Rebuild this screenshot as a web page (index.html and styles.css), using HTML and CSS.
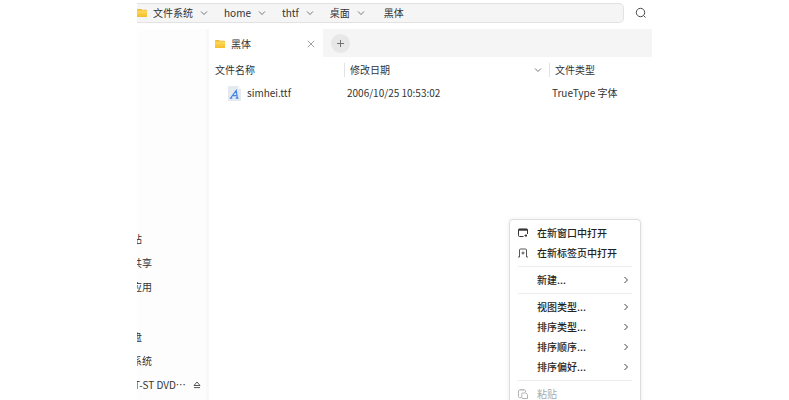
FILE: index.html
```html
<!DOCTYPE html>
<html lang="zh-CN">
<head>
<meta charset="utf-8">
<title>黑体</title>
<link rel="stylesheet" href="styles.css">
</head>
<body>
<svg class="defs" aria-hidden="true">
  <defs>
    <linearGradient id="gold" x1="0" y1="0" x2="0" y2="1"><stop offset="0" stop-color="#ffdc62"/><stop offset="1" stop-color="#f5bd27"/></linearGradient>
    <symbol id="folder" viewBox="0 0 10 8"><path d="M0 1Q0 0 1 0H4L5 .8H9Q10 .8 10 1.8V7Q10 8 9 8H1Q0 8 0 7Z" fill="#edb92f"/><rect y="1.4" width="10" height="6.6" rx="1" fill="url(#gold)"/></symbol>
    <symbol id="down" viewBox="0 0 8 8"><path d="M1 2.5L4 5.5L7 2.5" fill="none" stroke="currentColor" stroke-width=".9"/></symbol>
    <symbol id="right" viewBox="0 0 8 8"><path d="M2.5 1L5.5 4L2.5 7" fill="none" stroke="currentColor"/></symbol>
  </defs>
</svg>
<div class="window">
  <header class="toolbar">
    <nav class="address">
      <svg class="folder"><use href="#folder"/></svg>
      <a class="crumb" href="#">文件系统</a><svg class="chevron"><use href="#down"/></svg>
      <a class="crumb" href="#">home</a><svg class="chevron"><use href="#down"/></svg>
      <a class="crumb" href="#">thtf</a><svg class="chevron"><use href="#down"/></svg>
      <a class="crumb" href="#">桌面</a><svg class="chevron"><use href="#down"/></svg>
      <a class="crumb last" href="#">黑体</a>
    </nav>
    <button class="search"><svg width="12" height="12" viewBox="0 0 12 12" fill="none" stroke="#4c4c4c"><circle cx="5.5" cy="5.5" r="4.2"/><path d="M8.5 8.5L10.5 10.5"/></svg></button>
  </header>
  <div class="body">
    <aside class="sidebar">
      <a class="place" href="#">站</a>
      <a class="place" href="#">共享</a>
      <a class="place" href="#">应用</a>
      <a class="place group" href="#">盘</a>
      <a class="place" href="#">系统</a>
      <a class="place drive" href="#"><span class="disc">T-ST DVD⋯</span><svg class="eject" viewBox="0 0 8 8" fill="none" stroke="#444" stroke-width=".9"><path d="M4 1L7 4.5H1ZM1 6.6H7"/></svg></a>
    </aside>
    <main class="main">
      <div class="tabs">
        <div class="tab"><svg class="folder"><use href="#folder"/></svg><span>黑体</span>
          <button class="close"><svg width="8" height="8" viewBox="0 0 8 8" stroke="#888" stroke-width=".8"><path d="M.8 .8L7.2 7.2M7.2 .8L.8 7.2"/></svg></button></div>
        <button class="add"><svg width="7" height="7" viewBox="0 0 7 7" stroke="#666" stroke-width=".9"><path d="M3.5 0V7M0 3.5H7"/></svg></button>
      </div>
      <table class="files">
        <colgroup><col class="name"><col class="date"><col></colgroup>
        <thead><tr>
          <th>文件名称</th>
          <th><div class="head sorted"><span>修改日期</span><svg class="chevron"><use href="#down"/></svg></div></th>
          <th><div class="head">文件类型</div></th>
        </tr></thead>
        <tbody><tr>
          <td><div class="file"><svg width="13" height="15" viewBox="0 0 13 15"><path d="M1 0H10L13 3V14Q13 15 12 15H1Q0 15 0 14V1Q0 0 1 0Z" fill="#e5eaf1"/><path d="M10 0V3H13Z" fill="#f7f8fa"/><path d="M2.6 12L8.2 4.6L9.4 12M4.6 9.6H9M1.8 12.2H4.4M7.6 12.2H10.6" fill="none" stroke="#4285e6" stroke-width="1.2"/></svg><span>simhei.ttf</span></div></td>
          <td>2006/10/25 10:53:02</td>
          <td>TrueType 字体</td>
        </tr></tbody>
      </table>
    </main>
  </div>
  <div class="menu">
    <button class="item"><svg class="icon" viewBox="0 0 10 10" fill="none" stroke="#333"><path d="M5.5 8.5H1.5Q.5 8.5 .5 7.5V2Q.5 1 1.5 1H8.5Q9.5 1 9.5 2V6"/><path d="M.5 1.8H9.5" stroke-width="1.8"/><path d="M6.5 7.5H9M8 6.2V9"/></svg><span>在新窗口中打开</span></button>
    <button class="item"><svg class="icon" viewBox="0 0 10 10" fill="none" stroke="#444" stroke-width=".9"><path d="M0 9H1.5V2Q1.5 1 2.5 1H7.5Q8.5 1 8.5 2V9H10M5 3.5V6.5M3.5 5H6.5"/></svg><span>在新标签页中打开</span></button>
    <hr>
    <button class="item"><span>新建...</span><svg class="arrow"><use href="#right"/></svg></button>
    <hr>
    <button class="item"><span>视图类型...</span><svg class="arrow"><use href="#right"/></svg></button>
    <button class="item"><span>排序类型...</span><svg class="arrow"><use href="#right"/></svg></button>
    <button class="item"><span>排序顺序...</span><svg class="arrow"><use href="#right"/></svg></button>
    <button class="item"><span>排序偏好...</span><svg class="arrow"><use href="#right"/></svg></button>
    <hr>
    <button class="item" disabled><svg class="icon" viewBox="0 0 10 10" fill="none" stroke="#aaa" stroke-width=".9"><path d="M3 8.5H1.5Q.5 8.5 .5 7.5V2Q.5 1 1.5 1H6.5Q7.5 1 7.5 2V3M3 1V0H5.5V1"/><path d="M4.5 4H8L9.5 5.5V9.5H4.5Q3.8 9.5 3.8 8.8V4.7Q3.8 4 4.5 4Z"/></svg><span>粘贴</span></button>
  </div>
</div>
</body>
</html>
```
FILE: styles.css
```css
* { box-sizing: border-box; }
body {
  margin: 0;
  padding: 0 137px;
  height: 100vh;
  overflow: hidden;
  background: #fff;
  color: #333;
  font: 10px/20px "Noto Sans CJK SC", sans-serif;
}
a { color: inherit; text-decoration: none; }
button { font: inherit; color: inherit; border: 0; background: none; padding: 0; }
svg { flex: none; display: block; }
.defs { position: absolute; width: 0; height: 0; }
.window { position: relative; height: 100%; display: flex; flex-direction: column; overflow: hidden; }

.toolbar { display: flex; align-items: center; gap: 11px; padding: 3px 5px 6px 0; }
.address {
  flex: 1;
  display: flex;
  align-items: center;
  height: 20px;
  background: #f5f5f5;
  border: 1px solid #e2e2e2;
  border-left: 0;
  border-radius: 0 5px 5px 0;
}
.folder { width: 10px; height: 8px; margin-right: 6px; }
.chevron { width: 8px; height: 8px; color: #666; }
.address .chevron { margin: 0 16px 0 7px; }
.address .last { margin-left: 3px; }
.search { width: 12px; height: 12px; }

.body { flex: 1; display: flex; min-height: 0; }
.sidebar {
  width: 72px;
  flex: none;
  display: flex;
  flex-direction: column;
  gap: 4px;
  padding-top: 200px;
  overflow: hidden;
  background: #fdfdfd;
  border-right: 3px solid #f8f8f8;
}
.place { display: flex; align-items: center; flex: none; margin-left: -5px; padding-right: 5px; white-space: nowrap; }
.group { margin-top: 26px; }
.drive { margin-left: -3px; }
.disc { flex: 1; }
.eject { width: 8px; height: 8px; }

.main { flex: 1; min-width: 0; }
.tabs { display: flex; align-items: center; height: 28px; background: #f5f5f5; }
.tab { display: flex; align-items: center; width: 114px; height: 28px; padding: 2px 8px 0 6px; background: #fff; }
.close { width: 8px; height: 8px; margin-left: auto; }
.add {
  display: flex;
  align-items: center;
  justify-content: center;
  width: 19px;
  height: 19px;
  margin-left: 8px;
  border-radius: 50%;
  background: #e7e7e7;
}

.files { width: 100%; table-layout: fixed; border-collapse: collapse; }
.name { width: 135px; }
.date { width: 205px; }
.files th { padding: 0; height: 26px; font-weight: 400; text-align: left; }
.files th:first-child { padding-left: 6px; }
.files td { padding: 0 0 0 3px; height: 20px; }
.files td:first-child { padding-left: 19px; }
.head { display: flex; align-items: center; height: 14px; padding-left: 5px; border-left: 1px solid #e2e2e2; }
.sorted { justify-content: space-between; padding-right: 7px; }
.file { display: flex; align-items: center; gap: 6px; }

.menu {
  position: absolute;
  top: 219px;
  right: 11px;
  width: 132px;
  padding: 3px 8px;
  background: #fff;
  border: 1px solid #dedede;
  border-radius: 4px;
  box-shadow: 0 0 4px #00000014;
  color: #222;
  font-weight: 500;
}
.item { display: flex; align-items: center; width: 100%; height: 20px; padding-right: 2px; }
.item span { margin-left: 19px; }
.icon { width: 10px; height: 10px; }
.icon + span { margin-left: 9px; }
.arrow { width: 8px; height: 8px; margin-left: auto; color: #444; }
.item:disabled { color: #aaa; font-weight: 400; }
hr { height: 1px; margin: 3px 0; border: 0; background: #ececec; }
```
